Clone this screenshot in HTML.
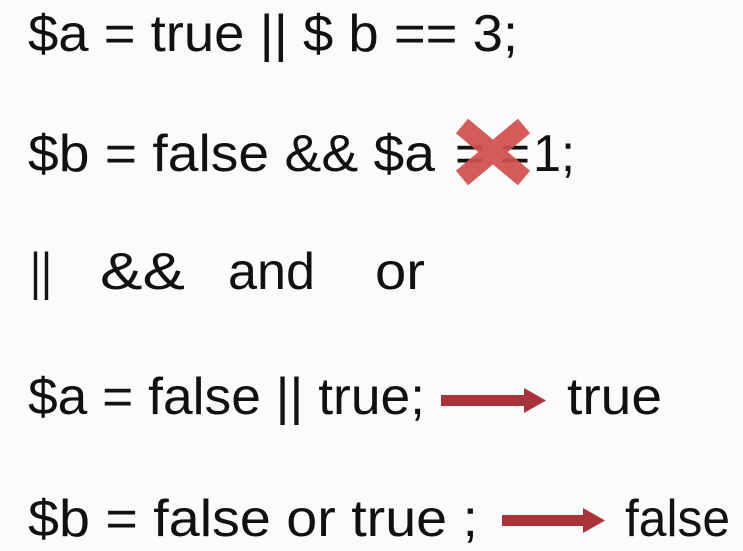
<!DOCTYPE html>
<html><head><meta charset="utf-8"><style>
html,body{margin:0;padding:0;background:#fbfbfb;width:743px;height:551px;overflow:hidden}
svg{display:block}
text{font-family:"Liberation Sans",sans-serif;font-size:52px;fill:#111}
</style></head><body>
<svg width="743" height="551" viewBox="0 0 743 551">
<rect width="743" height="551" fill="#fbfbfb"/>
<text x="28" y="51" textLength="490" lengthAdjust="spacingAndGlyphs">$a = true || $ b == 3;</text>
<text x="28" y="171" textLength="407" lengthAdjust="spacingAndGlyphs">$b = false &amp;&amp; $a</text>
<text x="455" y="171" textLength="75" lengthAdjust="spacingAndGlyphs">= =</text>
<g stroke="#d0504c" stroke-width="19" stroke-linecap="butt" opacity="0.93">
<line x1="462" y1="126" x2="524" y2="178"/>
<line x1="524" y1="126" x2="462" y2="178"/>
</g>
<text x="533" y="171" textLength="42" lengthAdjust="spacingAndGlyphs">1;</text>
<text x="30" y="289" textLength="22" lengthAdjust="spacingAndGlyphs">||</text>
<text x="100" y="289" textLength="85" lengthAdjust="spacingAndGlyphs">&amp;&amp;</text>
<text x="228" y="289" textLength="87" lengthAdjust="spacingAndGlyphs">and</text>
<text x="375" y="289" textLength="50" lengthAdjust="spacingAndGlyphs">or</text>
<text x="28" y="414" textLength="397" lengthAdjust="spacingAndGlyphs">$a = false || true;</text>
<g fill="#a8333a"><rect x="441" y="395" width="86" height="11"/><polygon points="524,388 546,400.5 524,413"/></g>
<text x="567" y="414" textLength="95" lengthAdjust="spacingAndGlyphs">true</text>
<text x="28" y="536" textLength="450" lengthAdjust="spacingAndGlyphs">$b = false  or true ;</text>
<g fill="#a8333a"><rect x="502" y="515" width="84" height="11"/><polygon points="583,508 605,520.5 583,533"/></g>
<text x="625" y="536" textLength="105" lengthAdjust="spacingAndGlyphs">false</text>
</svg>
</body></html>
